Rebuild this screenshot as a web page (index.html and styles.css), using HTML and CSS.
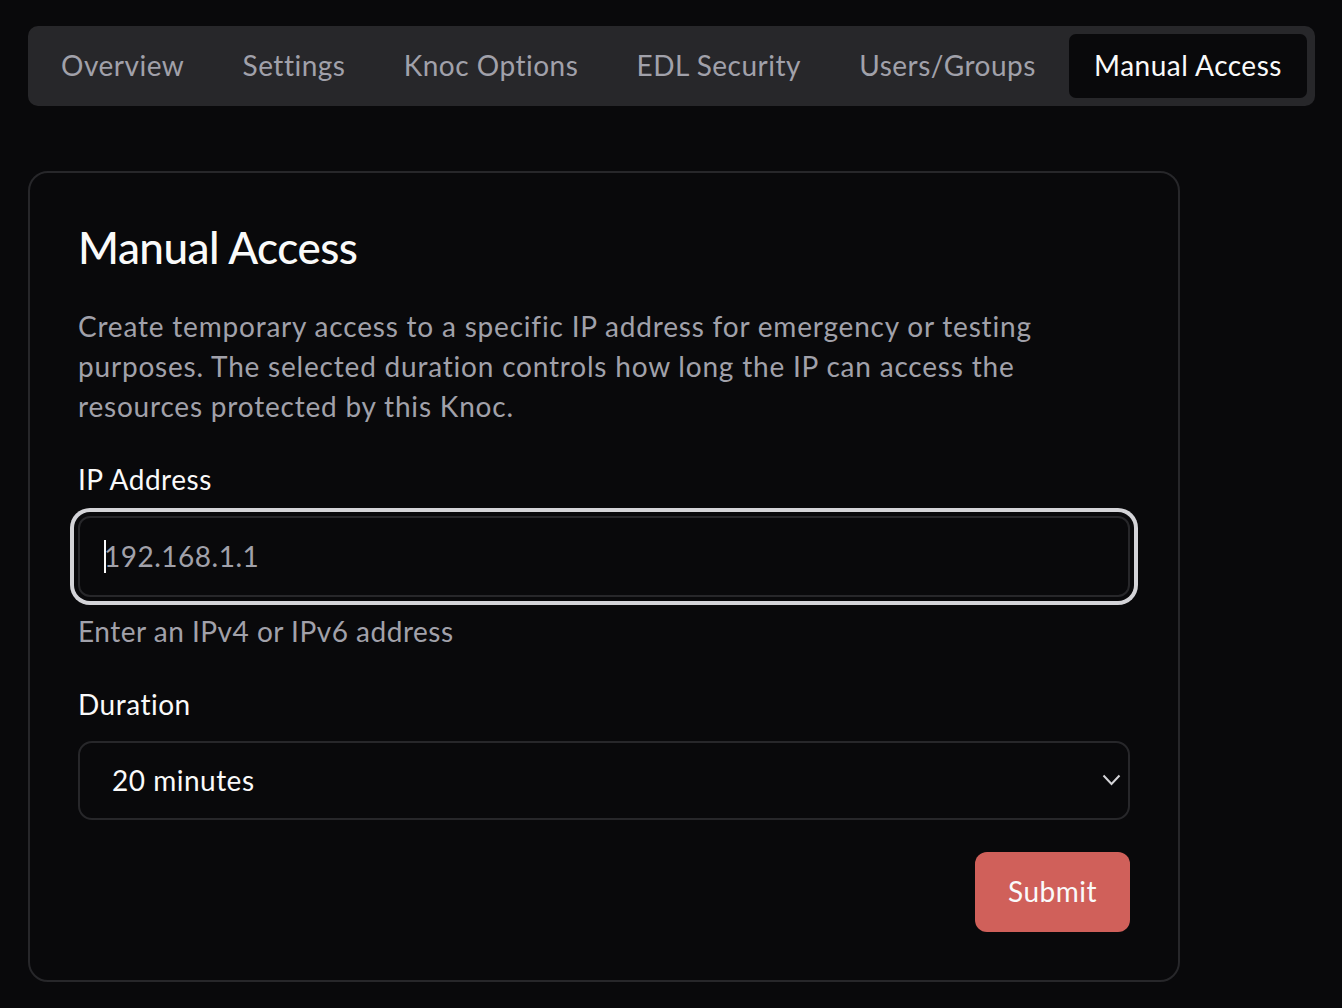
FILE: index.html
```html
<html lang="en">

<head>
    <meta charset="UTF-8">
    <meta name="viewport" content="width=device-width, initial-scale=1.0">
    <title>Knoc - Manual Access</title>
    <link rel="stylesheet" href="styles.css">
</head>

<body>
    <div class="page">
        <!-- Section tabs -->
        <nav class="tabs">
            <a class="tab">Overview</a>
            <a class="tab">Settings</a>
            <a class="tab">Knoc Options</a>
            <a class="tab">EDL Security</a>
            <a class="tab">Users/Groups</a>
            <a class="tab active">Manual Access</a>
        </nav>

        <!-- Manual access card -->
        <div class="card">
            <h2 class="card-title">Manual Access</h2>
            <p class="card-desc">Create temporary access to a specific IP address for emergency or testing
                purposes. The selected duration controls how long the IP can access the
                resources protected by this Knoc.</p>

            <div class="field">
                <label for="ip-address">IP Address</label>
                <div class="input-wrap">
                    <input type="text" id="ip-address" placeholder="192.168.1.1">
                    <span class="caret"></span>
                </div>
                <div class="hint">Enter an IPv4 or IPv6 address</div>
            </div>

            <div class="field">
                <label for="duration">Duration</label>
                <button class="select" id="duration">
                    <span>20 minutes</span>
                    <svg width="19" height="12" viewBox="0 0 19 12">
                        <polyline points="1.5,1.5 9.5,10 17.5,1.5" fill="none" stroke="#d4d4d8" stroke-width="2" />
                    </svg>
                </button>
            </div>

            <div class="actions">
                <button class="submit">Submit</button>
            </div>
        </div>
    </div>
</body>

</html>
```

FILE: styles.css
```css
body {
    margin: 0;
    background: #09090b;
    color: #fafafa;
    font-family: 'Lato', 'Open Sans', sans-serif;
    letter-spacing: 0.5px;
}

.page {
    padding: 26px 27px 0 28px;
}

.tabs {
    display: flex;
    gap: 8px;
    padding: 8px;
    background: #27272a;
    border-radius: 10px;
}

.tab {
    flex: 1 1 auto;
    height: 64px;
    box-sizing: border-box;
    display: flex;
    align-items: center;
    justify-content: center;
    padding: 0 24px 3px 24px;
    border-radius: 7px;
    font-size: 28px;
    color: #a1a1aa;
    white-space: nowrap;
    cursor: pointer;
}

.tab.active {
    background: #09090b;
    color: #fafafa;
}

.card {
    width: 1152px;
    box-sizing: border-box;
    margin-top: 65px;
    padding: 48px;
    border: 2px solid #27272a;
    border-radius: 20px;
}

.card-title {
    margin: 0;
    font-size: 44px;
    line-height: 52px;
    font-weight: 500;
    letter-spacing: -0.5px;
}

.card-desc {
    margin: 33px 0 0 0;
    font-size: 28px;
    line-height: 40px;
    letter-spacing: 0.8px;
    color: #a1a1aa;
}

.field {
    margin-top: 33px;
}

label {
    display: block;
    font-size: 28px;
    line-height: 40px;
    margin-bottom: 17px;
}

.input-wrap {
    position: relative;
}

input {
    display: block;
    width: 100%;
    height: 81px;
    box-sizing: border-box;
    padding: 0 24px 2px 24px;
    background: #09090b;
    border: 2px solid #27272a;
    border-radius: 12px;
    box-shadow: 0 0 0 4px #09090b, 0 0 0 8px #d4d4d8;
    font-family: inherit;
    font-size: 28px;
    letter-spacing: 0.5px;
    color: #fafafa;
    outline: none;
}

input::placeholder {
    color: #a1a1aa;
}

.caret {
    position: absolute;
    left: 26px;
    top: 24px;
    width: 2px;
    height: 33px;
    background: #fafafa;
}

.hint {
    margin-top: 14px;
    font-size: 28px;
    line-height: 40px;
    color: #a1a1aa;
}

.select {
    display: flex;
    align-items: center;
    justify-content: space-between;
    width: 100%;
    height: 79px;
    padding: 0 7px 2px 32px;
    background: #09090b;
    border: 2px solid #27272a;
    border-radius: 14px;
    font-family: inherit;
    font-size: 28px;
    letter-spacing: 0.5px;
    color: #fafafa;
    cursor: pointer;
}

.actions {
    display: flex;
    justify-content: flex-end;
    margin-top: 32px;
}

.submit {
    height: 80px;
    padding: 0 33px 2px 33px;
    background: #d0605a;
    border: none;
    border-radius: 12px;
    font-family: inherit;
    font-size: 28px;
    letter-spacing: 0.5px;
    color: #fafafa;
    cursor: pointer;
}
```
